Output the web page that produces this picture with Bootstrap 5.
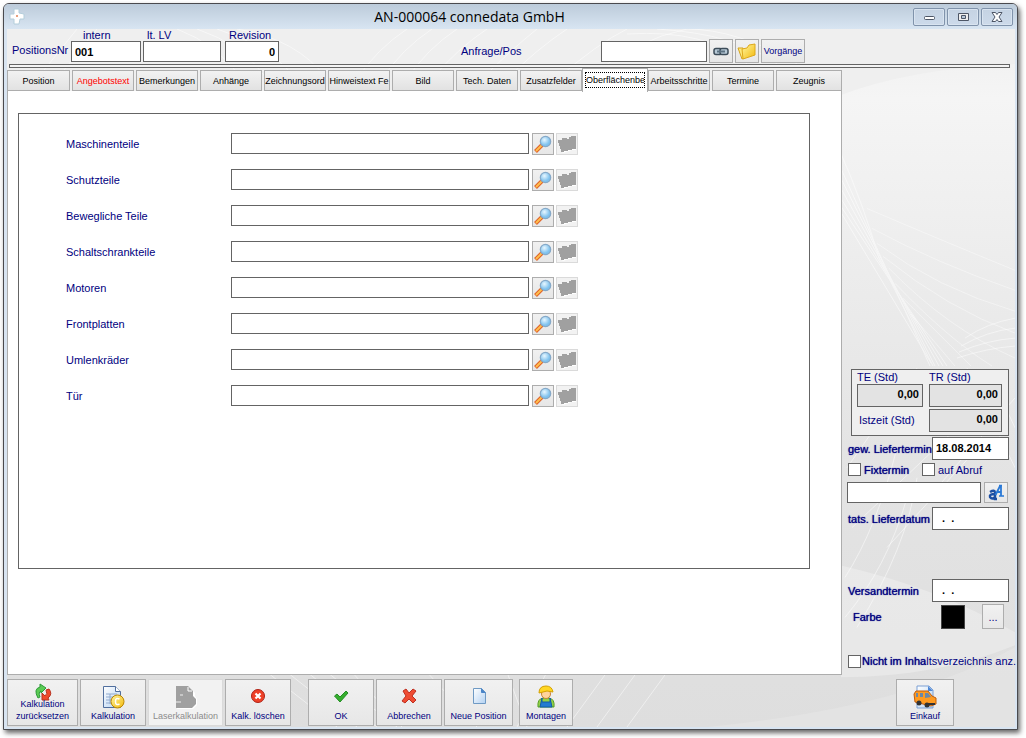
<!DOCTYPE html>
<html lang="de">
<head>
<meta charset="utf-8">
<meta name="viewport" content="width=device-width, initial-scale=1">
<title>AN-000064 connedata GmbH</title>
<link href="https://cdn.jsdelivr.net/npm/bootstrap@5.3.0/dist/css/bootstrap.min.css" rel="stylesheet">
<style>
  :root { --navy: #000080; --line: #646464; --edge: #adadad; }
  body { font: 11px/14px "Liberation Sans", Arial, sans-serif; color: var(--navy); background: #fff; padding: 3px 8px 8px 3px; min-height: 100vh; }
  .app-window { min-height: calc(100vh - 11px); border: 1px solid #4a4a4e; border-radius: 6px 6px 0 0; box-shadow: 2px 3px 5px rgba(0,0,0,.6); background: #d8e4f1; overflow: hidden; }
  .title-bar { height: 25px; background: linear-gradient(#bccbda, #d8e5f2); padding: 0 4px 0 5px; }
  .title-text { font: 14px/20px "Open Sans", "Noto Sans", sans-serif; color: #000; }
  .win-group { gap: 2px; }
  .win-btn { width: 32px; height: 18px; border: 1px solid #8093ab; border-radius: 2px; background: linear-gradient(#c5d3e3, #cddaea); box-shadow: inset 0 0 0 1px #d9e4f0; padding: 0; line-height: 0; }
  .client { margin: 0 2px 2px 3px; background: #e6e6e6; }
  .backdrop { z-index: 0; }
  .client > :not(.backdrop) { position: relative; z-index: 1; }
  .head-bar { height: 35px; padding: 0 5px; }
  .head-bar .above { height: 12px; line-height: 12px; }
  .pos-label { width: 59px; margin-top: 14px; }
  .request { margin: 10px 0 0 182px; gap: 2px; }
  .request label { width: 138px; }
  .box { height: 21px; border: 1px solid var(--line); border-radius: 0; background: #fff; color: #000; font-weight: 700; padding: 0 3px; outline-offset: -2px; }
  .w-int { width: 70px; } .w-lv { width: 78px; } .w-rev { width: 54px; } .w-req { width: 106px; }
  .face { border: 1px solid var(--edge); border-radius: 0; background: linear-gradient(#f1f1f1, #e7e7e7); color: var(--navy); padding: 0; font-size: 11px; line-height: 12px; }
  .face-sm { height: 24px; min-width: 24px; }
  .face-text { width: 44px; font-size: 9px; }
  .face-row { width: 22px; height: 22px; line-height: 0; margin-right: 2px; }
  .face:disabled { border-color: #dadada; background: #f2f2f2; color: #8c8c8c; opacity: 1; }
  .double-rule { height: 4px; border: 1px solid var(--line); background: #f4f4f4; margin: 0 5px 2px 2px; }
  .tab-strip { height: 21px; border: 0; gap: 2px; }
  .tab-strip .nav-item { width: 62px; }
  .tab-strip .nav-item:first-child { width: 63px; }
  .tab-strip .nav-item:last-child { flex: 1; }
  .tab-strip .nav-item.front { width: 66px; margin: 0 -2px; z-index: 2; }
  .tab-strip .nav-link { width: 100%; height: 21px; margin: 0; border: 1px solid var(--edge); border-radius: 0; background: linear-gradient(#f2f2f2, #e2e2e2); color: #000; font-size: 9px; line-height: 20px; padding: 0; overflow: hidden; white-space: nowrap; }
  .tab-strip .nav-link.active { height: 24px; margin-top: -2px; background: #fff; border-color: var(--edge); border-bottom: 0; color: #000; padding: 3px 3px 5px; }
  .tab-strip .clip { display: flex; justify-content: safe center; overflow: hidden; }
  .tab-strip .active .clip { outline: 1px dotted #000; line-height: 14px; height: 14px; }
  .tab-strip .nav-link.alert-tab { color: #f00; }
  .sheet { border: 1px solid var(--edge); background: #fff; padding: 22px 31px 105px 10px; }
  .form-frame { border: 1px solid var(--line); padding: 19px 16px 16px 47px; height: 100%; }
  .form-line { height: 22px; margin-bottom: 14px; }
  .form-line label { width: 165px; line-height: 22px; }
  .form-line .box { width: 298px; margin-right: 3px; }
  .side { width: 173px; padding: 0 6px 7px 5px; }
  .times { border: 1px solid var(--line); padding: 0 7px 3px 5px; margin: 0 0 1px 4px; background: #efefef; }
  .times-grid { grid-template-columns: 66px 73px; column-gap: 6px; row-gap: 2px; }
  .times .box { background: #e3e3e3; height: 23px; width: 100%; padding-bottom: 3px; }
  .times label { line-height: 13px; }
  .date { width: 77px; height: 23px; padding-bottom: 2px; }
  .side-line { height: 23px; padding-left: 1px; white-space: nowrap; }
  .ticks { height: 19px; }
  .note-line { gap: 3px; margin: 3px 1px 4px 0; }
  .ship-line { margin-top: 49px; }
  .colour-line { margin: 2px 5px 25px 6px; }
  .heavy { text-shadow: 0 0 1px var(--navy); }
  .form-check-input.tick { width: 13px; height: 13px; margin: 0; border: 1px solid var(--line); border-radius: 0; background-color: #fff; flex: none; }
  .swatch { width: 24px; height: 24px; background: #000; border: 1px solid #444; border-radius: 0; padding: 0; margin-right: 17px; }
  .foot { height: 52px; padding: 4px 0 0; gap: 2px; }
  .act { height: 47px; width: 66px; display: flex; flex-direction: column; align-items: center; justify-content: flex-end; padding-bottom: 3px; white-space: nowrap; font-size: 9px; }
  .act svg { margin-bottom: 1px; flex: none; }
  .act .small-icon { margin-bottom: 6px; }
  .act .tucked-icon { margin-bottom: -3px; }
</style>
</head>
<body>
<svg width="0" height="0" class="position-absolute" aria-hidden="true">
  <defs>
    <radialGradient id="lensFill" cx=".4" cy=".35"><stop offset="0" stop-color="#e8f7ff"/><stop offset="1" stop-color="#7fc2ee"/></radialGradient>
    <linearGradient id="yellowFill" x1="0" y1="0" x2="1" y2="1"><stop offset="0" stop-color="#fff6a0"/><stop offset="1" stop-color="#f3b90c"/></linearGradient>
    <linearGradient id="paperFill" x1="0" y1="0" x2="1" y2="1"><stop offset="0" stop-color="#fff"/><stop offset="1" stop-color="#b4d2f2"/></linearGradient>
    <symbol id="lens" viewBox="0 0 18 18"><path d="M1.500 16.500 8 10" stroke="#e0642a" stroke-width="4"/><path d="M2 16 7.500 10.500" stroke="#ffc04d" stroke-width="1.800"/><circle cx="11.500" cy="6.500" r="5.200" fill="url(#lensFill)" stroke="#86a9c8" stroke-width="1.200"/></symbol>
    <symbol id="folderOff" viewBox="0 0 20 18"><path d="M19 3v12h-4l-9 3-2-2 1-3z" fill="#fff"/><path d="M1 5h4V3h5v1h2V2h2V1h5v13h-4v1h-4v1H7v1H4v-3H3v-3H2V8H1z" fill="#a0a0a0"/></symbol>
  </defs>
</svg>

<div class="app-window d-flex flex-column">
  <header class="title-bar d-flex align-items-center">
    <svg width="17" height="17" viewBox="0 0 17 17" aria-hidden="true"><path d="M5 1h5v4l5 1v5h-4l-1 5H5v-5H1V6h4z" fill="#fff" stroke="#b4cedb"/><path d="M7 7h2v2H7z" fill="#e8a07e"/></svg>
    <h1 class="title-text m-0 flex-grow-1 text-center">AN-000064 connedata GmbH</h1>
    <div class="win-group d-flex">
      <button class="win-btn" aria-label="Minimieren"><svg width="14" height="12" viewBox="0 0 14 12"><rect x="2.500" y="5.500" width="10" height="3" rx="1" fill="#fff" stroke="#4d5666"/></svg></button>
      <button class="win-btn" aria-label="Maximieren"><svg width="14" height="12" viewBox="0 0 14 12"><path d="M2.500 2.500h10v7h-10z" fill="#eee" stroke="#4d5666"/><path d="M5.500 4.500h4v3h-4z" fill="#b8c8da" stroke="#4d5666"/></svg></button>
      <button class="win-btn" aria-label="Schließen"><svg width="14" height="12" viewBox="0 0 14 12"><path d="M2 1.500h3.500L7 3.500l1.500-2H12L9 6l3 4.500H8.500L7 8.500l-1.500 2H2L5 6z" fill="#fff" stroke="#4d5666"/></svg></button>
    </div>
  </header>

  <main class="client flex-grow-1 d-flex flex-column position-relative">
    <svg class="backdrop position-absolute top-0 start-0 w-100 h-100" viewBox="0 0 1008 700" preserveAspectRatio="none" aria-hidden="true">
      <defs><linearGradient id="wall" x1="0" y1="0" x2="0" y2="1"><stop offset="0" stop-color="#efefef"/><stop offset=".1" stop-color="#f5f5f5"/><stop offset=".35" stop-color="#ececec"/><stop offset=".6" stop-color="#e4e4e4"/><stop offset="1" stop-color="#dedede"/></linearGradient></defs>
      <path d="M0 0h1008v700H0z" fill="url(#wall)"/>
      <path d="M0 0h1008v35Q900 40 832 67H0z" fill="#efefef"/>
      <g fill="none" stroke="#fff" stroke-width="1" opacity=".5">
        <path d="M30 50 70 0M50 50 90 0M230 0Q290 10 320 50M210 0Q260 15 290 50M190 0Q235 15 260 50M170 0Q210 15 235 50M350 50Q370 20 400 0M375 50Q395 20 425 0M400 50Q420 20 450 0M425 50Q450 20 480 0M475 50Q505 20 530 0M500 50Q530 20 560 0M550 50Q590 15 620 0M580 50Q630 10 680 0Q730 0 790 35M650 0Q730 5 770 35M620 5Q700 0 740 35"/>
        <path d="M834 125Q856 175 872 230L926 338M834 140 923 338M834 150 928 338M834 160 932 338M834 170 936 338M834 178 940 338M834 184 924 335"/>
        <path d="M958 310Q980 295 1008 290M954 318Q980 303 1008 300M952 324Q980 312 1008 310M950 330Q980 320 1008 318"/>
        <path d="M850 400 880 370M840 440 910 340M845 500 950 400M880 520 980 410M838 550Q870 500 890 420M838 590Q880 540 900 470M850 600Q900 520 910 450M930 460 1008 370M960 340 1008 440M985 350 1008 400"/>
        <path d="M260 645 330 700M280 645 350 700M300 645 370 700M320 645 390 700M345 645 395 700M420 645 470 700M500 645 520 700M540 645 510 700M560 700 600 645M590 700 630 645M620 700 660 645"/>
      </g>
      <path d="M860 180Q930 210 1008 242M865 200Q930 235 1008 262M870 215Q930 260 1008 283M876 228Q940 280 1008 305M882 240Q940 300 1008 330M888 255Q940 310 985 338M896 270 964 338M904 286 948 338" fill="none" stroke="#fff" opacity=".4"/>
      <path d="M834 538Q930 560 1008 605V618Q930 650 834 650z" fill="#fff" opacity=".28"/>
      <path d="M700 700Q900 680 1008 620V700z" fill="#fff" opacity=".15"/>
    </svg>

    <div class="head-bar d-flex align-items-start">
      <label for="intern" class="pos-label">PositionsNr</label>
      <div class="d-flex flex-column"><label for="intern" class="above ps-2 ms-1">intern</label><input id="intern" class="box w-int" value="001"></div>
      <div class="d-flex flex-column" style="margin-left:2px"><label for="lv" class="above ps-1">lt. LV</label><input id="lv" class="box w-lv"></div>
      <div class="d-flex flex-column ms-1"><label for="rev" class="above ps-1">Revision</label><input id="rev" class="box w-rev text-end" value="0"></div>
      <div class="request d-flex align-items-center">
        <label for="req">Anfrage/Pos</label>
        <input id="req" class="box w-req">
        <button class="face face-sm" aria-label="Verknüpfen"><svg width="16" height="10" viewBox="0 0 16 10"><rect x="1" y="1.500" width="8" height="6" rx="2" fill="#b7c9d6" stroke="#3c4c59" stroke-width="1.500"/><rect x="7" y="1.500" width="8" height="6" rx="2" fill="#b7c9d6" stroke="#3c4c59" stroke-width="1.500"/><path d="M4 4.500h8" stroke="#5c7282" stroke-width="2"/></svg></button>
        <button class="face face-sm" aria-label="Ordner"><svg width="20" height="20" viewBox="0 0 20 20"><path d="M1 7h5l2 10-3 1z" fill="#ffe97c" stroke="#d4a21c"/><path d="M5 8l5-1 2-3 6-1v11L6 18z" fill="url(#yellowFill)" stroke="#dda81b"/></svg></button>
        <button class="face face-sm face-text">Vorgänge</button>
      </div>
    </div>
    <div class="double-rule"></div>

    <div class="d-flex flex-grow-1">
      <div class="d-flex flex-column flex-grow-1">
        <ul class="nav nav-tabs tab-strip flex-nowrap" role="tablist">
          <li class="nav-item"><button class="nav-link" role="tab"><span class="clip">Position</span></button></li>
          <li class="nav-item"><button class="nav-link alert-tab" role="tab"><span class="clip">Angebotstext</span></button></li>
          <li class="nav-item"><button class="nav-link" role="tab"><span class="clip">Bemerkungen</span></button></li>
          <li class="nav-item"><button class="nav-link" role="tab"><span class="clip">Anhänge</span></button></li>
          <li class="nav-item"><button class="nav-link" role="tab"><span class="clip">Zeichnungsord</span></button></li>
          <li class="nav-item"><button class="nav-link" role="tab"><span class="clip">Hinweistext Fe</span></button></li>
          <li class="nav-item"><button class="nav-link" role="tab"><span class="clip">Bild</span></button></li>
          <li class="nav-item"><button class="nav-link" role="tab"><span class="clip">Tech. Daten</span></button></li>
          <li class="nav-item"><button class="nav-link" role="tab"><span class="clip">Zusatzfelder</span></button></li>
          <li class="nav-item front"><button class="nav-link active" role="tab" aria-selected="true"><span class="clip">Oberflächenbe</span></button></li>
          <li class="nav-item"><button class="nav-link" role="tab"><span class="clip">Arbeitsschritte</span></button></li>
          <li class="nav-item"><button class="nav-link" role="tab"><span class="clip">Termine</span></button></li>
          <li class="nav-item"><button class="nav-link" role="tab"><span class="clip">Zeugnis</span></button></li>
        </ul>
        <section class="sheet flex-grow-1 border-top-0">
          <div class="form-frame">
            <div class="form-line d-flex align-items-start"><label for="f1">Maschinenteile</label><input id="f1" class="box"><button class="face face-row" aria-label="Suchen"><svg width="18" height="18"><use href="#lens"/></svg></button><button class="face face-row" disabled aria-label="Öffnen"><svg width="20" height="18"><use href="#folderOff"/></svg></button></div>
            <div class="form-line d-flex align-items-start"><label for="f2">Schutzteile</label><input id="f2" class="box"><button class="face face-row" aria-label="Suchen"><svg width="18" height="18"><use href="#lens"/></svg></button><button class="face face-row" disabled aria-label="Öffnen"><svg width="20" height="18"><use href="#folderOff"/></svg></button></div>
            <div class="form-line d-flex align-items-start"><label for="f3">Bewegliche Teile</label><input id="f3" class="box"><button class="face face-row" aria-label="Suchen"><svg width="18" height="18"><use href="#lens"/></svg></button><button class="face face-row" disabled aria-label="Öffnen"><svg width="20" height="18"><use href="#folderOff"/></svg></button></div>
            <div class="form-line d-flex align-items-start"><label for="f4">Schaltschrankteile</label><input id="f4" class="box"><button class="face face-row" aria-label="Suchen"><svg width="18" height="18"><use href="#lens"/></svg></button><button class="face face-row" disabled aria-label="Öffnen"><svg width="20" height="18"><use href="#folderOff"/></svg></button></div>
            <div class="form-line d-flex align-items-start"><label for="f5">Motoren</label><input id="f5" class="box"><button class="face face-row" aria-label="Suchen"><svg width="18" height="18"><use href="#lens"/></svg></button><button class="face face-row" disabled aria-label="Öffnen"><svg width="20" height="18"><use href="#folderOff"/></svg></button></div>
            <div class="form-line d-flex align-items-start"><label for="f6">Frontplatten</label><input id="f6" class="box"><button class="face face-row" aria-label="Suchen"><svg width="18" height="18"><use href="#lens"/></svg></button><button class="face face-row" disabled aria-label="Öffnen"><svg width="20" height="18"><use href="#folderOff"/></svg></button></div>
            <div class="form-line d-flex align-items-start"><label for="f7">Umlenkräder</label><input id="f7" class="box"><button class="face face-row" aria-label="Suchen"><svg width="18" height="18"><use href="#lens"/></svg></button><button class="face face-row" disabled aria-label="Öffnen"><svg width="20" height="18"><use href="#folderOff"/></svg></button></div>
            <div class="form-line d-flex align-items-start"><label for="f8">Tür</label><input id="f8" class="box"><button class="face face-row" aria-label="Suchen"><svg width="18" height="18"><use href="#lens"/></svg></button><button class="face face-row" disabled aria-label="Öffnen"><svg width="20" height="18"><use href="#folderOff"/></svg></button></div>
          </div>
        </section>
      </div>

      <aside class="side d-flex flex-column flex-shrink-0 justify-content-end">
        <div class="times">
          <div class="times-grid d-grid">
            <div><label for="te">TE (Std)</label><input id="te" class="box text-end" value="0,00" readonly></div>
            <div><label for="tr">TR (Std)</label><input id="tr" class="box text-end" value="0,00" readonly></div>
            <label for="ist" class="align-self-center" style="padding-left:2px">Istzeit (Std)</label>
            <input id="ist" class="box text-end" value="0,00" readonly>
          </div>
        </div>
        <div class="side-line d-flex align-items-center"><label for="wish" class="heavy me-auto">gew. Liefertermin</label><input id="wish" class="box date" value="18.08.2014"></div>
        <div class="side-line ticks d-flex align-items-center">
          <input type="checkbox" id="fix" class="form-check-input tick"><label for="fix" class="heavy" style="width:61px;padding-left:3px">Fixtermin</label>
          <input type="checkbox" id="call" class="form-check-input tick"><label for="call" style="padding-left:3px">auf Abruf</label>
        </div>
        <div class="note-line d-flex"><input class="box w-100" aria-label="Bemerkung zum Termin"><button class="face flex-shrink-0" style="width:24px;height:21px" aria-label="Schrift"><svg width="18" height="17" viewBox="0 0 18 17"><path d="M3 8Q8 5 8 9V15H10M8 10Q2 10 3 13Q5 16 8 13" fill="none" stroke="#1d4fa3" stroke-width="2.400"/><path d="M8.500 11 13 2h1v10M10 8h4" fill="none" stroke="#2a79d6" stroke-width="1.800"/><path d="M12 12h5M12 1.500h3" stroke="#2a79d6" stroke-width="1.500"/></svg></button></div>
        <div class="side-line d-flex align-items-center"><label for="real" class="heavy me-auto">tats. Lieferdatum</label><input id="real" class="box date" value="  .  ."></div>
        <div class="side-line ship-line d-flex align-items-center"><label for="ship" class="heavy me-auto">Versandtermin</label><input id="ship" class="box date" value="  .  ."></div>
        <div class="colour-line d-flex align-items-center"><label for="pick" class="heavy me-auto">Farbe</label><button class="swatch" aria-label="Aktuelle Farbe"></button><button id="pick" class="face" style="width:22px;height:25px">...</button></div>
        <div class="side-line d-flex align-items-center" style="height:14px"><input type="checkbox" id="toc" class="form-check-input tick"><label for="toc" style="padding-left:1px"><span class="heavy">Nicht im Inha</span>ltsverzeichnis anz.</label></div>
      </aside>
    </div>

    <footer class="foot d-flex">
      <button class="face act" style="width:71px"><svg class="tucked-icon" width="18" height="18" viewBox="0 0 18 18"><path d="M4 15Q-1 6 6 4V1l6 4-5 5V8Q4 9 6 14z" fill="#5ccb55" stroke="#2d9b38"/><path d="M15 6Q19 11 14 15l1 2H8v-7l3 3Q14 11 12 7z" fill="#ef4a2c" stroke="#b9321f"/></svg><span class="position-relative">Kalkulation<br>zurücksetzen</span></button>
      <button class="face act"><svg width="24" height="24" viewBox="0 0 24 24"><path d="M2.500 1.500h12l5 5v16h-17z" fill="url(#paperFill)" stroke="#516f9e"/><path d="M14.500 1.500v5h5" fill="#fff" stroke="#516f9e"/><path d="M5 9h11M5 12h9M5 15h7M5 18h7M9 9v10" stroke="#91aacf"/><circle cx="16.500" cy="16.500" r="6.500" fill="url(#yellowFill)" stroke="#bd8700"/><path d="M18.500 14q-4-2-4 2.500t4 2.500" fill="none" stroke="#fff" stroke-width="1.500"/></svg>Kalkulation</button>
      <button class="face act" style="width:75px" disabled><svg width="24" height="24" viewBox="0 0 24 24"><path d="M3 2h12l6 6v3l2 3v6l-4 4H3z" fill="#fff"/><path d="M2 1h12l5 5v5l3 3v5l-4 4H2z" fill="#a0a0a0"/><path d="M14 2v4h4" fill="none" stroke="#fff"/><path d="M6 10h3M2 17h5" stroke="#eee"/></svg>Laserkalkulation</button>
      <button class="face act"><svg class="small-icon" width="16" height="16" viewBox="0 0 16 16"><circle cx="8" cy="8" r="6.500" fill="#ee4027" stroke="#ae2317"/><path d="m5.500 5.500 5 5m0-5-5 5" stroke="#fff" stroke-width="2.200"/></svg>Kalk. löschen</button>
      <button class="face act" style="margin-left:15px"><svg class="small-icon" width="16" height="16" viewBox="0 0 16 16"><path d="m1.500 8 2.500-2 3 3L13 3l2 2-8 9z" fill="#35ae2d" stroke="#238d24"/></svg>OK</button>
      <button class="face act"><svg class="small-icon" width="16" height="16" viewBox="0 0 16 16"><path d="m2 3 3-2 3 4 4-4 3 2-4 5 4 4-3 3-4-4-4 4-3-2 4-5z" fill="#ef4c33" stroke="#bf2f20"/></svg>Abbrechen</button>
      <button class="face act" style="width:69px"><svg width="16" height="18" viewBox="0 0 16 18" style="margin-bottom:5px"><path d="M2.500 1.500h8l4 4v11h-12z" fill="url(#paperFill)" stroke="#6f9ac4"/><path d="M10.500 1.500v4h4" fill="#4a85c8" stroke="#4a85c8"/></svg>Neue Position</button>
      <button class="face act" style="width:54px;margin-left:4px"><svg width="20" height="24" viewBox="0 0 20 24"><path d="M2 22q-1-8 5-9h6q6 1 5 9z" fill="#94d243" stroke="#559e25"/><path d="M6 13v4h8v-4l2 9H4z" fill="#247bd0" stroke="#125ba8"/><circle cx="10" cy="9" r="4.500" fill="#ffd49c" stroke="#c98236"/><path d="M3 8q0-7 7-7 6 0 7 6l-6-1z" fill="#ffd622" stroke="#d4a000"/></svg>Montagen</button>
      <button class="face act ms-auto" style="width:58px;margin-right:61px"><svg width="24" height="24" viewBox="0 0 24 24"><path d="M4 1h12l4 4v18H4z" fill="url(#paperFill)" stroke="#7a9fd4"/><path d="M15 1v5h5" fill="#4c87d7"/><path d="M1 9 3 6h12l4 5 4 2v6l-5 2L2 17z" fill="#ff9b21" stroke="#bf5c0d"/><path d="M3 8h2v4H3zM7 8h3v4H7zM12 8h3l3 4-6 1z" fill="#6b88a8"/><path d="M14 18h8v2h-8z" fill="#333"/><circle cx="6" cy="18" r="2.500" fill="#333"/><circle cx="14" cy="20" r="2.500" fill="#333"/></svg>Einkauf</button>
    </footer>
  </main>
</div>
<script src="https://cdn.jsdelivr.net/npm/bootstrap@5.3.0/dist/js/bootstrap.bundle.min.js"></script>
</body>
</html>
